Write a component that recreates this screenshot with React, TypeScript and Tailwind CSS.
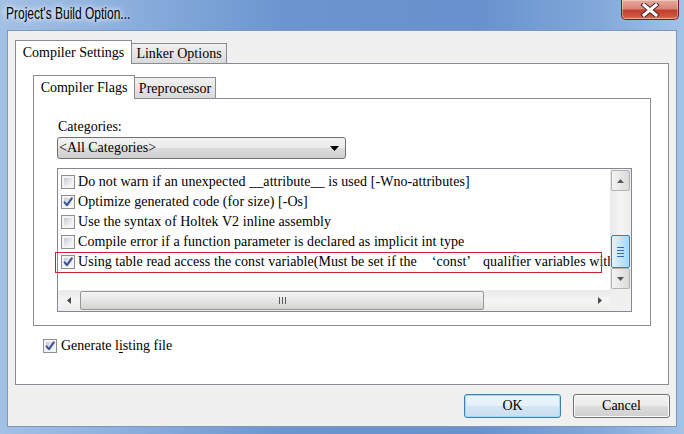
import React from "react";

function CheckBox({ checked }: { checked?: boolean }) {
  return (
    <div className="relative w-[14px] h-[14px] shrink-0 border border-[#8e8f8f] bg-[#f4f4f4] p-[2px]">
      <div className="w-full h-full bg-gradient-to-br from-[#c6cbd2] via-[#e2e4e7] to-[#f8f8f8]" />
      {checked && (
        <svg className="absolute inset-0" width="12" height="12" viewBox="0 0 12 12">
          <path d="M2.6 6.3 L5 9.2 L9.8 2.4" stroke="#3a5596" strokeWidth="2.1" fill="none" strokeLinecap="round" strokeLinejoin="round" />
        </svg>
      )}
    </div>
  );
}

function Row({ checked, children }: { checked?: boolean; children: React.ReactNode }) {
  return (
    <div className="h-[20px] flex items-center gap-[3px] whitespace-nowrap">
      <CheckBox checked={checked} />
      <span className="leading-[16px] tracking-[0.06px]">{children}</span>
    </div>
  );
}

function Tri({ dir, color = "#5b5b5b" }: { dir: "up" | "down" | "left" | "right"; color?: string }) {
  const pts: Record<string, string> = {
    up: "0,4 3.5,0 7,4",
    down: "0,0 3.5,4 7,0",
    left: "4,0 0,3.5 4,7",
    right: "0,0 4,3.5 0,7",
  };
  const vertical = dir === "up" || dir === "down";
  return (
    <svg width={vertical ? 7 : 4} height={vertical ? 4 : 7} viewBox={vertical ? "0 0 7 4" : "0 0 4 7"}>
      <polygon points={pts[dir]} fill={color} />
    </svg>
  );
}

export default function App() {
  return (
    <div className="w-[684px] h-[434px] overflow-hidden flex flex-col bg-[linear-gradient(90deg,#a3c0e5_0%,#8cafdd_18%,#6a95cf_42%,#6792cd_70%,#83a9da_88%,#a3c2e7_100%)] font-['Liberation_Serif',serif] text-[14px] text-black">
      {/* Title bar */}
      <div className="h-[30px] flex items-start shrink-0">
        <div className="mt-[5px] pl-[6px] w-[200px]">
          <span className="block origin-left scale-x-75 whitespace-nowrap font-['Liberation_Sans',sans-serif] text-[16px] leading-[18px] text-black [text-shadow:0_0_6px_#ffffff,0_0_10px_#ffffff]">
            Project's Build Option...
          </span>
        </div>
        <div className="ml-auto mr-[5px] w-[58px] h-[20px] rounded-b-[5px] border border-t-0 border-[#6b231c] bg-[linear-gradient(180deg,#e9aa9f_0%,#d98577_45%,#c23e2e_55%,#d0533e_85%,#e07a5e_100%)] flex items-center justify-center shadow-[inset_0_0_0_1px_rgba(255,255,255,0.35)]">
          <svg width="20" height="14" viewBox="0 0 20 14">
            <path d="M4 2 L16 12 M16 2 L4 12" stroke="#4a2a28" strokeWidth="5" strokeLinecap="square" />
            <path d="M4 2 L16 12 M16 2 L4 12" stroke="#ffffff" strokeWidth="3" strokeLinecap="square" />
          </svg>
        </div>
      </div>

      {/* Client area */}
      <div className="mx-[7px] mb-[7px] flex-1 bg-[#f0f0f0] border border-[#7f96b6] pt-[9px] px-[7px] flex flex-col">
        {/* Outer tab strip */}
        <div className="flex items-end h-[23px] relative z-10">
          <div className="w-[117px] h-[24px] -mb-px border border-b-0 border-[#898c95] bg-white flex items-center justify-center leading-[16px] whitespace-nowrap">
            Compiler Settings
          </div>
          <div className="w-[95px] h-[20px] border border-l-0 border-b-0 border-[#898c95] bg-gradient-to-b from-[#f1f1f1] to-[#d9d9d9] flex items-center justify-center leading-[16px] whitespace-nowrap pt-[1px]">
            Linker Options
          </div>
        </div>
        {/* Outer panel */}
        <div className="h-[322px] border border-[#898c95] bg-white pt-[11px] px-[17px] flex flex-col">
          {/* Inner tab strip */}
          <div className="flex items-end h-[23px] relative z-10">
            <div className="w-[102px] h-[24px] -mb-px border border-b-0 border-[#898c95] bg-white flex items-center justify-center leading-[16px] whitespace-nowrap">
              Compiler Flags
            </div>
            <div className="w-[81px] h-[21px] border border-l-0 border-b-0 border-[#898c95] bg-gradient-to-b from-[#f1f1f1] to-[#d9d9d9] flex items-center justify-center leading-[16px] whitespace-nowrap pt-[1px]">
              Preprocessor
            </div>
          </div>
          {/* Inner panel */}
          <div className="h-[228px] border border-[#898c95] bg-white pt-[20px] pl-[23px] flex flex-col">
            <div className="h-[16px] leading-[16px] pl-[1px]">Categories:</div>
            <div className="mt-[2px] w-[289px] h-[22px] rounded-[3px] border border-[#707070] bg-[linear-gradient(180deg,#f2f2f2_0%,#ebebeb_50%,#dddddd_51%,#cfcfcf_100%)] flex items-center pl-[1px] pr-[6px]">
              <span className="leading-[16px] flex-1">&lt;All Categories&gt;</span>
              <svg width="9" height="5" viewBox="0 0 9 5">
                <polygon points="0,0 9,0 4.5,5" fill="#000000" />
              </svg>
            </div>

            {/* Listbox */}
            <div className="mt-[9px] w-[575px] h-[144px] border border-[#828790] bg-white relative flex flex-col">
              <div className="flex flex-1 min-h-0">
                <div className="flex-1 overflow-hidden pt-[3px] pl-[3px]">
                  <Row>Do not warn if an unexpected __attribute__ is used [-Wno-attributes]</Row>
                  <Row checked>Optimize generated code (for size) [-Os]</Row>
                  <Row>Use the syntax of Holtek V2 inline assembly</Row>
                  <Row>Compile error if a function parameter is declared as implicit int type</Row>
                  <Row checked>
                    Using table read access the const variable(Must be set if the
                    <span className="ml-[15px]">‘const’</span>
                    <span className="ml-[12px]">qualifier variables with</span>
                  </Row>
                </div>
                {/* Vertical scrollbar */}
                <div className="w-[21px] flex flex-col bg-gradient-to-r from-[#e9e9e9] via-[#f5f5f5] to-[#ececec]">
                  <div className="h-[21px] mx-[1px] mt-[1px] rounded-[2px] border border-[#b3b3b3] bg-gradient-to-r from-[#f4f4f4] to-[#dadada] flex items-center justify-center">
                    <Tri dir="up" color="#585858" />
                  </div>
                  <div className="flex-1" />
                  <div className="h-[33px] mx-[1px] rounded-[2px] border border-[#3c7fb1] bg-gradient-to-r from-[#e5f4fc] via-[#c4e5f6] to-[#a9d9f2] flex flex-col items-center justify-center gap-[2px]">
                    <div className="w-[7px] h-px bg-[#3b6aa0]" />
                    <div className="w-[7px] h-px bg-[#3b6aa0]" />
                    <div className="w-[7px] h-px bg-[#3b6aa0]" />
                    <div className="w-[7px] h-px bg-[#3b6aa0]" />
                  </div>
                  <div className="h-[21px] mx-[1px] mb-[1px] rounded-[2px] border border-[#b3b3b3] bg-gradient-to-r from-[#f4f4f4] to-[#dadada] flex items-center justify-center">
                    <Tri dir="down" color="#585858" />
                  </div>
                </div>
              </div>
              {/* Horizontal scrollbar */}
              <div className="h-[21px] flex shrink-0">
                <div className="flex-1 flex bg-gradient-to-b from-[#e9e9e9] via-[#f5f5f5] to-[#ececec]">
                  <div className="w-[22px] flex items-center justify-center">
                    <Tri dir="left" color="#4a4a4a" />
                  </div>
                  <div className="w-[404px] my-[1px] rounded-[2px] border border-[#979797] bg-gradient-to-b from-[#f4f4f4] via-[#e6e6e6] to-[#d3d3d3] flex items-center justify-center gap-[2px]">
                    <div className="w-px h-[7px] bg-[#5a5a5a]" />
                    <div className="w-px h-[7px] bg-[#5a5a5a]" />
                    <div className="w-px h-[7px] bg-[#5a5a5a]" />
                  </div>
                  <div className="flex-1" />
                  <div className="w-[21px] flex items-center justify-center">
                    <Tri dir="right" color="#4a4a4a" />
                  </div>
                </div>
                <div className="w-[21px] bg-[#f0f0f0]" />
              </div>
              {/* Red annotation */}
              <div className="absolute left-[-3px] top-[83px] w-[547px] h-[21px] border border-[#c3262c] pointer-events-none" />
            </div>
          </div>

          {/* Generate listing file */}
          <div className="mt-[10px] h-[20px] pl-[10px] flex items-center gap-[4px]">
            <CheckBox checked />
            <span className="leading-[16px]">
              Generate l<span className="underline underline-offset-2">i</span>sting file
            </span>
          </div>
        </div>

        {/* Buttons */}
        <div className="mt-[9px] -mr-[1px] flex justify-end gap-[12px]">
          <div className="w-[97px] h-[24px] rounded-[3px] border border-[#3c7fb1] bg-[linear-gradient(180deg,#eef6fc_0%,#e4eff8_50%,#d5e6f3_51%,#c9deef_100%)] shadow-[inset_0_0_0_1px_#a6daf6] flex items-center justify-center leading-[16px]">
            OK
          </div>
          <div className="w-[97px] h-[24px] rounded-[3px] border border-[#707070] bg-[linear-gradient(180deg,#f2f2f2_0%,#ebebeb_50%,#dddddd_51%,#cfcfcf_100%)] shadow-[inset_0_0_0_1px_#fbfbfb] flex items-center justify-center leading-[16px]">
            Cancel
          </div>
        </div>
      </div>
    </div>
  );
}
